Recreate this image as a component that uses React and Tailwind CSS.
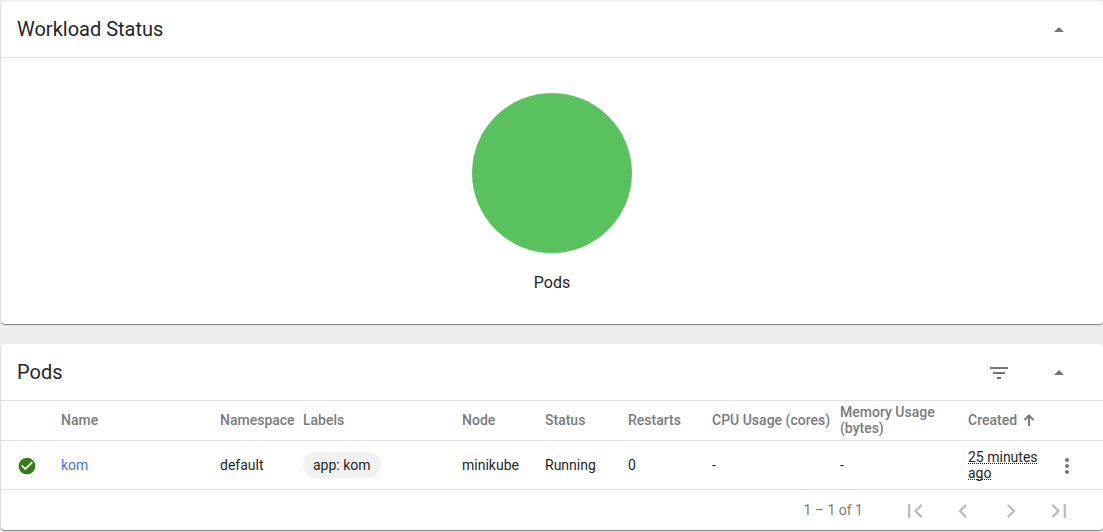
function Icon({ d, className = "size-6" }) {
  return (
    <svg viewBox="0 0 24 24" className={className} fill="currentColor" aria-hidden="true">
      <path d={d} />
    </svg>
  );
}

const icons = {
  filter: "M10 18h4v-2h-4v2zM3 6v2h18V6H3zm3 7h12v-2H6v2z",
  collapse: "M7 14l5-5 5 5z",
  check:
    "M12 2C6.48 2 2 6.48 2 12s4.48 10 10 10 10-4.48 10-10S17.52 2 12 2zm-2 15l-5-5 1.41-1.41L10 14.17l7.59-7.59L19 8l-9 9z",
  more: "M12 8c1.1 0 2-.9 2-2s-.9-2-2-2-2 .9-2 2 .9 2 2 2zm0 2c-1.1 0-2 .9-2 2s.9 2 2 2 2-.9 2-2-.9-2-2-2zm0 6c-1.1 0-2 .9-2 2s.9 2 2 2 2-.9 2-2-.9-2-2-2z",
  first: "M18.41 16.59L13.82 12l4.59-4.59L17 6l-6 6 6 6zM6 6h2v12H6z",
  prev: "M15.41 7.41L14 6l-6 6 6 6 1.41-1.41L10.83 12z",
  next: "M10 6L8.59 7.41 13.17 12l-4.58 4.59L10 18l6-6z",
  last: "M5.59 7.41L10.18 12l-4.59 4.59L7 18l6-6-6-6zM16 6h2v12h-2z",
};

function Card({ title, actions, children }) {
  return (
    <section className="overflow-hidden rounded bg-white shadow-[0_1px_1px_#00000066,0_1px_2px_#0000001a]">
      <header className="flex h-14 items-center justify-between pl-4 pr-8">
        <h2 className="text-xl">{title}</h2>
        <div className="flex items-center gap-9 pt-0.5 text-[#757575]">
          {actions}
          <button type="button" aria-label={"Collapse " + title} className="flex size-6 items-center justify-center">
            <Icon d={icons.collapse} />
          </button>
        </div>
      </header>
      <div className="border-t border-[#e0e0e0]">{children}</div>
    </section>
  );
}

const pages = [
  ["First page", icons.first],
  ["Previous page", icons.prev],
  ["Next page", icons.next],
  ["Last page", icons.last],
];

function PodsTable() {
  return (
    <table className="w-full table-fixed text-left text-sm leading-4">
      <colgroup>
        <col className="w-[60px]" />
        <col />
        <col className="w-[83px]" />
        <col />
        <col className="w-[83px]" />
        <col className="w-[83px]" />
        <col className="w-[84px]" />
        <col className="w-[128px]" />
        <col className="w-[128px]" />
        <col className="w-[84px]" />
        <col className="w-[51px]" />
      </colgroup>
      <thead>
        <tr className="h-[39px] border-b border-[#e0e0e0] text-[#7b7b7b] *:font-medium">
          <th aria-label="State" />
          <th>Name</th>
          <th>Namespace</th>
          <th>Labels</th>
          <th>Node</th>
          <th>Status</th>
          <th>Restarts</th>
          <th className="whitespace-nowrap">CPU Usage (cores)</th>
          <th className="pr-6">Memory Usage (bytes)</th>
          <th aria-sort="ascending">
            <button type="button" className="flex items-center gap-1.5">
              Created
              <svg viewBox="0 0 12 12" className="size-3" fill="none" stroke="currentColor" strokeWidth="2" aria-hidden="true">
                <path d="M6 12V1.5M1.5 6L6 1.5L10.5 6" />
              </svg>
            </button>
          </th>
          <th aria-label="Actions" />
        </tr>
      </thead>
      <tbody>
        <tr className="h-[49px] border-b border-[#e0e0e0]">
          <td className="pl-4 pt-0.5 text-[#347b1b]"><Icon d={icons.check} className="size-5" /></td>
          <td><a href="#kom" className="text-[#3d75e7]">kom</a></td>
          <td>default</td>
          <td><span className="inline-block rounded-full bg-[#f1f1f1] px-[10px] py-[5px]">app: kom</span></td>
          <td>minikube</td>
          <td>Running</td>
          <td>0</td>
          <td>-</td>
          <td>-</td>
          <td><span className="underline decoration-dotted decoration-1 underline-offset-1 [text-decoration-skip-ink:none]">25 minutes ago</span></td>
          <td className="pl-[3px] pt-0.5">
            <button type="button" aria-label="Pod actions" className="flex size-6 items-center justify-center text-[#757575]">
              <Icon d={icons.more} />
            </button>
          </td>
        </tr>
      </tbody>
    </table>
  );
}

export default function App() {
  return (
    <main className="flex min-h-screen flex-col gap-5 bg-[#ecedef] pl-px pt-px font-['Roboto',sans-serif] text-[#262626]">
      <Card title="Workload Status">
        <figure className="flex flex-col items-center gap-[18px] pb-[29px] pt-[35px]">
          <svg viewBox="0 0 160 160" className="size-40" role="img" aria-label="All pods running">
            <circle cx="80" cy="80" r="80" fill="#5ac15f" />
          </svg>
          <figcaption className="text-base">Pods</figcaption>
        </figure>
      </Card>
      <Card
        title="Pods"
        actions={
          <button type="button" aria-label="Filter" className="flex size-6 items-center justify-center">
            <Icon d={icons.filter} />
          </button>
        }
      >
        <PodsTable />
        <nav aria-label="Pods pages" className="flex h-10 items-center justify-end gap-10 pr-8 text-sm text-[#7b7b7b]">
          <span>1 – 1 of 1</span>
          <div className="flex gap-6 pt-0.5">
            {pages.map(([label, d]) => (
              <button key={label} type="button" aria-label={label} disabled className="flex size-6 items-center justify-center text-[#bdbdbd]">
                <Icon d={d} className="size-7 shrink-0" />
              </button>
            ))}
          </div>
        </nav>
      </Card>
    </main>
  );
}
